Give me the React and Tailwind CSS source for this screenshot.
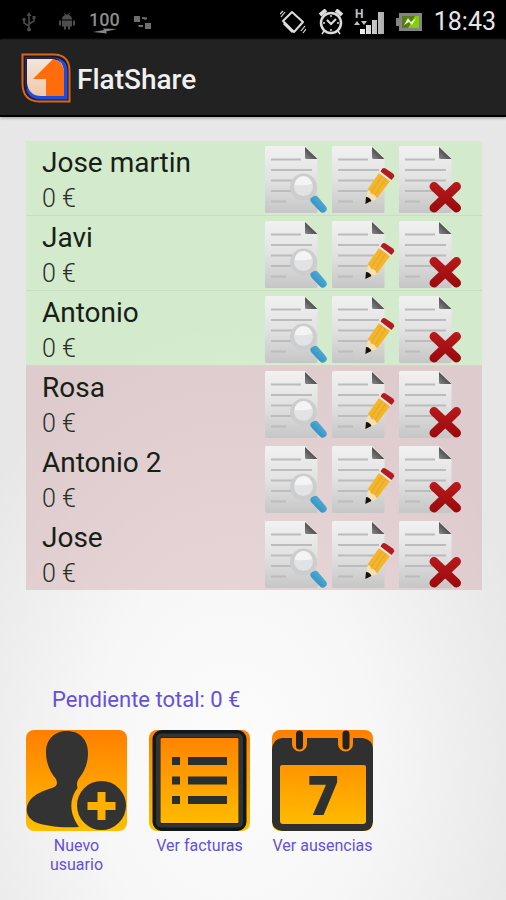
import { useId } from 'react';

const users = [
  { id: 1, name: 'Jose martin', balance: 0, present: true },
  { id: 2, name: 'Javi', balance: 0, present: true },
  { id: 3, name: 'Antonio', balance: 0, present: true },
  { id: 4, name: 'Rosa', balance: 0, present: false },
  { id: 5, name: 'Antonio 2', balance: 0, present: false },
  { id: 6, name: 'Jose', balance: 0, present: false },
];

// Sheet of paper shared by the three row actions
const DocIcon = ({ children }) => {
  const id = useId();
  return (
    <svg viewBox="1 0 67 68" className="block h-[68px] w-[67px]" aria-hidden="true">
      <defs>
        <linearGradient id={`${id}-paper`} x1="0" y1="0" x2="0" y2="1">
          <stop offset="0" stopColor="#f1f1f1" />
          <stop offset="0.5" stopColor="#e2e2e2" />
          <stop offset="1" stopColor="#c6c6c6" />
        </linearGradient>
        <linearGradient id={`${id}-fold`} x1="0" y1="1" x2="1" y2="0">
          <stop offset="0" stopColor="#8a8a8a" />
          <stop offset="0.6" stopColor="#444" />
          <stop offset="1" stopColor="#333" />
        </linearGradient>
      </defs>
      <path d="M3.5 0H42L54.500 12.500V65.500Q54.500 67 53 67H3.500Q2 67 2 65.500V1.500Q2 0 3.500 0Z" fill={`url(#${id}-paper)`} />
      <path d="M42 1L54.500 13H43.500Q42 13 42 11.500Z" fill={`url(#${id}-fold)`} />
      <path d="M8 13.500H38M8 24H49M8 34.500H49M8 45H49M8 55.500H23" stroke="#bcbcbc" strokeWidth="2" />
      {children}
    </svg>
  );
};

const ViewIcon = () => {
  const id = useId();
  return (
    <DocIcon>
      <defs>
        <linearGradient id={id} x1="0" y1="1" x2="1" y2="0">
          <stop offset="0" stopColor="#2581b5" />
          <stop offset="1" stopColor="#5fbbe0" />
        </linearGradient>
      </defs>
      <circle cx="40.500" cy="41" r="13.500" fill="#cdcdcd" />
      <circle cx="40.500" cy="40.500" r="9.500" fill="#e1e3e4" />
      <path d="M32 39A8.500 8.500 0 0 1 49 38Q41 40 32 39Z" fill="#f4f4f4" />
      <path d="M48.500 56.500Q46 53.500 48.500 51.500L51 50Q53 49 55 51L63 60.500Q65 63.500 62.500 65.500Q59.500 68 57 65.500Z" fill={`url(#${id})`} />
    </DocIcon>
  );
};

const EditIcon = () => (
  <DocIcon>
    <path d="M38 43L49 27L60 34.500L47 53L35.500 58Z" fill="#f7dfb4" />
    <path d="M49 27L37.500 43.500L40.500 45.500L41.500 48L44.500 48.500L47 52.500L60 35Z" fill="#f2b52c" />
    <path d="M52.500 29.500L41 46.500M56 32L45 49" stroke="#e3a525" strokeWidth="1" />
    <path d="M36 51L35.300 58L41.500 55Q39.500 51 36 51Z" fill="#111" />
    <path d="M49 27L50.500 25L62 33L60.500 35.500Z" fill="#f5e9e2" />
    <path d="M50.500 25.500L52 23Q53.500 21.500 55.500 22.500L63 27.500Q65 29.500 63.500 31.500L61.500 34Z" fill="#b01c20" />
  </DocIcon>
);

const DeleteIcon = () => {
  const id = useId();
  return (
    <DocIcon>
      <defs>
        <linearGradient id={id} gradientUnits="userSpaceOnUse" x1="0" y1="35" x2="0" y2="67">
          <stop offset="0" stopColor="#bb1a1c" />
          <stop offset="0.500" stopColor="#a81214" />
          <stop offset="1" stopColor="#98090c" />
        </linearGradient>
      </defs>
      <path d="M37 40.500L59.500 62M59.500 40.500L37 62" stroke={`url(#${id})`} strokeWidth="9" strokeLinecap="round" />
    </DocIcon>
  );
};

const Tile = ({ children }) => {
  const id = useId();
  return (
    <svg viewBox="0 0 101 101" className="block size-[101px] rounded-lg" aria-hidden="true">
      <defs>
        <linearGradient id={id} x1="0" y1="0" x2="0" y2="1">
          <stop offset="0" stopColor="#ff7f00" />
          <stop offset="1" stopColor="#ffbf00" />
        </linearGradient>
      </defs>
      <rect width="101" height="101" fill={`url(#${id})`} />
      {children}
    </svg>
  );
};

const NewUserIcon = () => (
  <Tile>
    <path d="M41 1C54 1 62 10 62 23C62 34 58 42 54 47C50 52 51 55 51.500 58C43 69 43 83 53 97C35 98 18 96 9 92C2 88 0 83 1 77C3 66 16 61 26 58C31 56 32 54 30 49C24 42 20 33 20 22C20 9 29 1 41 1Z" fill="#333" />
    <circle cx="75.500" cy="75.500" r="24.500" fill="#333" />
    <path d="M75.500 62V90M61.500 76H89.500" stroke="#ffb000" strokeWidth="8" />
  </Tile>
);

const BillsIcon = () => (
  <Tile>
    <rect x="7.500" y="4" width="86" height="93" rx="5" fill="none" stroke="#111819" strokeWidth="8" />
    <rect x="9" y="5.500" width="83" height="90" rx="3" fill="none" stroke="#303435" strokeWidth="4" />
    <path d="M23 31H31M39 31H78M23 50.500H31M39 50.500H78M23 70H31M39 70H78" stroke="#263031" strokeWidth="8" />
  </Tile>
);

const AbsencesIcon = () => (
  <Tile>
    <path
      d="M10 8H20V14A7.500 7.500 0 0 0 35 14V8H66V14A7.500 7.500 0 0 0 81 14V8H91Q101 10 101 19V92Q100 101 91 101H10Q1 100 0 92V19Q1 9 10 8ZM10 35Q8 35 8 37V91Q8 94 11 94H91Q94 94 94 91V37Q94 35 92 35Z"
      fill="#303030"
      fillRule="evenodd"
    />
    <path d="M27.500 4V16M74 4V16" stroke="#222" strokeWidth="7" strokeLinecap="round" />
    <text x="51" y="85" textAnchor="middle" className="fill-[#2f3030] font-['Open_Sans',sans-serif] text-[54px] font-extrabold">7</text>
  </Tile>
);

const Logo = () => (
  <svg viewBox="0 0 50 50" className="size-[50px]" aria-hidden="true">
    <defs>
      <linearGradient id="logo-paper" x1="0" y1="0" x2="0" y2="1">
        <stop offset="0" stopColor="#f0e6dc" />
        <stop offset="1" stopColor="#f0c9a8" />
      </linearGradient>
    </defs>
    <path d="M1.500 1.500H33Q48 2 48.500 17V48.500H18Q2 48 1.500 31Z" fill="#1c1a1c" stroke="#d9661f" strokeWidth="2" />
    <path d="M4.500 4.500H32Q46 5 46.500 18V46.500H19Q5 46 4.500 31Z" fill="#1f4be0" />
    <path d="M4.500 4.500H32Q36 5 38 7L7 8L6 38Q4.500 35 4.500 31Z" fill="#26204a" />
    <path d="M6 6H31Q42 7 43 18V43H20Q8 43 6 30Z" fill="url(#logo-paper)" />
    <path d="M32 6Q42 8 43 18V43H25V26H12Z" fill="#ff6c0c" />
  </svg>
);

const StatusBar = () => (
  <div className="flex h-10 items-center justify-between bg-black pt-[3px] pr-[10px] pl-[22px]">
    <div className="flex items-center">
      <svg viewBox="0 0 14 20" className="h-5 w-[14px]" fill="none" stroke="#4a4a4a" strokeWidth="1.500" aria-hidden="true">
        <path d="M7 2V17M7 14L2 11V8M7 12L12 9V6" />
        <path d="M7 0L9.500 4H4.500Z" fill="#4a4a4a" stroke="none" />
        <circle cx="7" cy="17.500" r="2" fill="#4a4a4a" stroke="none" />
        <circle cx="2" cy="7.500" r="1.700" fill="#4a4a4a" stroke="none" />
        <path d="M10.500 4H13.500V7H10.500Z" fill="#4a4a4a" stroke="none" />
      </svg>
      <svg viewBox="0 0 16 17" className="ml-[23px] h-[17px] w-4" fill="#4d4d4d" aria-hidden="true">
        <path d="M3 6.500Q3 3 6 2L5 .5L5.500 0L7 1.500H9L10.500 0L11 .5L10 2Q13 3 13 6.500ZM3 7.500H13V13.500H11V16.500H9V13.500H7V16.500H5V13.500H3ZM0 7.500H2V12.500H0ZM14 7.500H16V12.500H14Z" />
      </svg>
      <div className="ml-[14px] flex flex-col items-center pt-[2px]">
        <span className="text-[18px] leading-4 font-medium text-[#8c8c8c]">100</span>
        <svg viewBox="0 0 26 6" className="h-[6px] w-[26px]" aria-hidden="true">
          <path d="M2 4L13 2L12 .5L26 1L15 3.500L16 5.500Z" fill="#858585" />
        </svg>
      </div>
      <svg viewBox="0 0 17 14" className="ml-[14px] h-[14px] w-[17px]" fill="#6e6e6e" aria-hidden="true">
        <path d="M0 1H6V7H0ZM11 8H17V14H11ZM8 2L13 2.500V4L11 5L10 4H8ZM9 12H5L4 10H9Z" />
      </svg>
    </div>

    <div className="flex items-center">
      <svg viewBox="0 0 26 24" className="h-6 w-[26px]" fill="none" stroke="#ddd" aria-hidden="true">
        <path d="M12 2L23 12L14 22L3 11Z" strokeWidth="2" strokeLinejoin="round" />
        <path d="M4 13L13 22" strokeWidth="3" />
        <path d="M1 7L5 2M0 4L3 1M21 21L25 16M23 23L26 19" strokeWidth="1.200" />
      </svg>
      <svg viewBox="0 0 26 26" className="ml-3 size-[26px]" fill="none" stroke="#dcdcdc" aria-hidden="true">
        <circle cx="13" cy="14" r="10" strokeWidth="2.500" />
        <path d="M2 6L8 1M24 6L18 1" strokeWidth="4" />
        <path d="M9 11L13 15L18 10" strokeWidth="2" />
        <path d="M13 6V8M13 20V22M5 14H7M19 14H21M6 22L4 25M20 22L22 25" strokeWidth="1.500" />
      </svg>
      <svg viewBox="0 -4 32 34" className="ml-[10px] h-[34px] w-8" aria-hidden="true">
        <defs>
          <linearGradient id="signal" x1="0" y1="0" x2="1" y2="0">
            <stop offset="0" stopColor="#f2f2f2" />
            <stop offset="1" stopColor="#aaa" />
          </linearGradient>
        </defs>
        <text x="1" y="9" className="fill-[#c4c4c4] text-[12px] font-bold">H</text>
        <path d="M0 16L3 12L6 16ZM7 12H13L10 16Z" fill="#c4c4c4" />
        <path d="M6 20H11V25H6ZM12 16H17V25H12ZM18 11H23V25H18ZM24 3H30V25H24Z" fill="url(#signal)" />
      </svg>
      <svg viewBox="0 0 26 18" className="ml-[10px] h-[18px] w-[26px]" aria-hidden="true">
        <path d="M3 0H26V18H3V13H0V5H3Z" fill="#848484" />
        <path d="M6 3H23V15H6Z" fill="#567d16" />
        <path d="M12 15L19 3H23V15Z" fill="#82d000" />
        <path d="M8 12L12 5L15 9L20 5L16 12L13 9Z" fill="#eef7cc" />
      </svg>
      <time className="ml-3 text-[25px] leading-8 text-[#e6e6e6]">18:43</time>
    </div>
  </div>
);

const UserRow = ({ user }) => (
  <li className={`flex border-b pr-[17px] pl-4 ${user.present ? 'border-[#c8dec2] bg-[#c0eeb4]/50' : 'border-transparent bg-[#d4b0b4]/50 last:border-b-0'}`}>
    <div className="min-w-0 flex-1 pt-[2px]">
      <h2 className="truncate text-[28px] leading-10 text-[#172017]">{user.name}</h2>
      <p className="text-[25px] leading-8 font-light text-[#2a2e2a]">{user.balance} €</p>
    </div>
    <div className="flex shrink-0 pt-1">
      <button type="button" aria-label={`Ver ${user.name}`}><ViewIcon /></button>
      <button type="button" aria-label={`Editar ${user.name}`}><EditIcon /></button>
      <button type="button" aria-label={`Eliminar ${user.name}`}><DeleteIcon /></button>
    </div>
  </li>
);

const MenuButton = ({ icon, children }) => (
  <button type="button" className="flex w-[101px] flex-col items-center text-[16px] leading-[19px] text-[#6650d8]">
    {icon}
    <span className="mt-[5px] w-20 min-w-fit text-center">{children}</span>
  </button>
);

const App = () => {
  const total = users.reduce((sum, u) => sum + u.balance, 0);

  return (
    <div className="flex min-h-screen flex-col bg-[radial-gradient(ellipse_60%_48%_at_46%_84%,#fcfcfc_0%,#f7f7f7_45%,#e7e7e7_100%)] font-[Roboto,sans-serif]">
      <StatusBar />

      <header className="flex h-[77px] items-center gap-[6px] border-b-2 border-black bg-[#222] pl-[21px] shadow-[0_1px_3px_#999]">
        <Logo />
        <h1 className="pt-1 text-[28px] leading-9 font-medium text-[#f0f0f0]">FlatShare</h1>
      </header>

      <main className="flex flex-col pt-6 pr-6 pb-6 pl-[26px]">
        <ul>
          {users.map((user) => (
            <UserRow key={user.id} user={user} />
          ))}
        </ul>

        <p className="mt-24 pl-[26px] text-[22px] leading-7 text-[#6650d8]">Pendiente total: {total} €</p>

        <nav className="mt-4 flex items-start gap-[22px]">
          <MenuButton icon={<NewUserIcon />}>Nuevo<br />usuario</MenuButton>
          <MenuButton icon={<BillsIcon />}>Ver facturas</MenuButton>
          <MenuButton icon={<AbsencesIcon />}>Ver ausencias</MenuButton>
        </nav>
      </main>
    </div>
  );
};

export default App;
